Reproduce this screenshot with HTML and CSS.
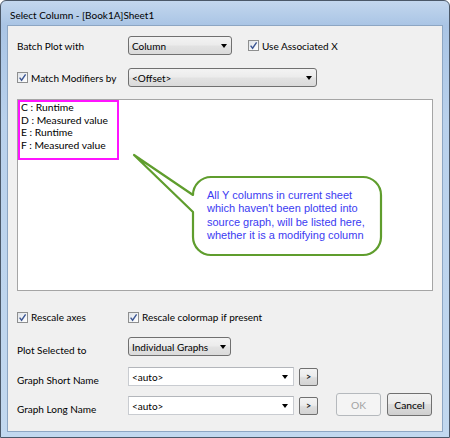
FILE: index.html
```html
<!DOCTYPE html>
<html>
<head>
<meta charset="utf-8">
<link rel="stylesheet" href="styles.css">
</head>
<body>
<div class="window">
  <div class="titlebar">Select Column - [Book1A]Sheet1</div>
  <div class="client">
    <div class="row r1">
      <span class="lbl">Batch Plot with</span>
      <div class="combo ro w-col"><span class="val">Column</span><span class="arrow"></span></div>
      <label class="check ml-x"><span class="cb"><svg viewBox="0 0 9 9"><path d="M1.6 4.6 L3.6 7.2 L7.6 1.4"/></svg></span><span>Use Associated X</span></label>
    </div>
    <div class="row r2">
      <label class="check lbl"><span class="cb"><svg viewBox="0 0 9 9"><path d="M1.6 4.6 L3.6 7.2 L7.6 1.4"/></svg></span><span>Match Modifiers by</span></label>
      <div class="combo ro w-off"><span class="val">&lt;Offset&gt;</span><span class="arrow"></span></div>
    </div>
    <div class="listbox">
      <div class="items">
        <span>C : Runtime</span>
        <span>D : Measured value</span>
        <span>E : Runtime</span>
        <span>F : Measured value</span>
      </div>
      <svg class="callout" width="400" height="170" viewBox="0 0 400 170">
        <path d="M175 95 L116 55 L175 112 L175 137 A18 18 0 0 0 193 155 L345 155 A18 18 0 0 0 363 137 L363 95 A18 18 0 0 0 345 77 L193 77 A18 18 0 0 0 175 95 Z"/>
      </svg>
      <div class="callout-text">All Y columns in current sheet<br>which haven't been plotted into<br>source graph, will be listed here,<br>whether it is a modifying column</div>
    </div>
    <div class="row r3">
      <label class="check lbl"><span class="cb"><svg viewBox="0 0 9 9"><path d="M1.6 4.6 L3.6 7.2 L7.6 1.4"/></svg></span><span>Rescale axes</span></label>
      <label class="check"><span class="cb"><svg viewBox="0 0 9 9"><path d="M1.6 4.6 L3.6 7.2 L7.6 1.4"/></svg></span><span>Rescale colormap if present</span></label>
    </div>
    <div class="row r4">
      <span class="lbl low">Plot Selected to</span>
      <div class="combo ro w-ind"><span class="val">Individual Graphs</span><span class="arrow"></span></div>
    </div>
    <div class="row r5">
      <span class="lbl low">Graph Short Name</span>
      <div class="combo ed w-auto"><span class="val">&lt;auto&gt;</span><span class="arrow"></span></div>
      <button class="small">&gt;</button>
    </div>
    <div class="row r6">
      <span class="lbl low">Graph Long Name</span>
      <div class="combo ed w-auto"><span class="val">&lt;auto&gt;</span><span class="arrow"></span></div>
      <button class="small">&gt;</button>
      <div class="actions">
        <button class="btn disabled">OK</button>
        <button class="btn">Cancel</button>
      </div>
    </div>
  </div>
</div>
</body>
</html>
```

FILE: styles.css
```css
html, body {
  margin: 0;
  padding: 0;
  background: #ffffff;
}
body {
  font-family: Lato, "Liberation Sans", sans-serif;
  font-size: 10px;
  color: #000;
}
.window {
  width: 450px;
  height: 438px;
  box-sizing: border-box;
  border: 1px solid #4b5868;
  border-radius: 6px 6px 0 0;
  background: linear-gradient(to bottom, #c3d7ee 0px, #aac5e5 24px, #b9d1ec 120px, #c2d8ef 100%);
  padding: 0 6px 5px 6px;
  display: flex;
  flex-direction: column;
}
.titlebar {
  height: 24px;
  box-sizing: border-box;
  padding: 3px 0 0 3px;
  display: flex;
  align-items: center;
  font-size: 10px;
  color: #000;
}
.client {
  flex: 1;
  background: #f0f0f0;
  border: 1px solid #8da6c3;
  padding: 10px 9px 0 9px;
  display: flex;
  flex-direction: column;
}
.row {
  display: flex;
  align-items: center;
  height: 19px;
  flex: none;
}
.r2 { margin-top: 13px; }
.r3 { margin-top: 16px; height: 20px; }
.r4 { margin-top: 10px; }
.r5 { margin-top: 11px; }
.r6 { margin-top: 10px; }
.lbl {
  width: 111px;
  flex: none;
  box-sizing: border-box;
  white-space: nowrap;
}
.lbl.low { padding-top: 6px; }
.check {
  display: flex;
  align-items: center;
  white-space: nowrap;
}
.ml-x { margin-left: 16px; }
.cb {
  width: 11px;
  height: 11px;
  box-sizing: border-box;
  border: 1px solid #8e8f8f;
  background: linear-gradient(135deg, #dfe3e8 0%, #f4f6f8 60%, #ffffff 100%);
  margin-right: 3px;
  flex: none;
  display: flex;
}
.cb svg {
  width: 9px;
  height: 9px;
}
.cb path {
  fill: none;
  stroke: #3c5693;
  stroke-width: 1.4;
}
.combo {
  height: 19px;
  box-sizing: border-box;
  display: flex;
  align-items: center;
  flex: none;
  position: relative;
}
.combo.ro {
  border: 1px solid #707070;
  border-radius: 3px;
  background: linear-gradient(to bottom, #f3f3f3 0%, #ececec 45%, #e2e2e2 55%, #dadada 100%);
}
.combo.ed {
  border: 1px solid #c9ccd1;
  border-top-color: #b3b6bb;
  background: #ffffff;
}
.combo .val {
  padding-left: 3px;
  flex: 1;
  white-space: nowrap;
}
.combo .arrow {
  width: 0;
  height: 0;
  border-left: 3.5px solid transparent;
  border-right: 3.5px solid transparent;
  border-top: 4px solid #000;
  margin-right: 4px;
}
.combo.ed .arrow { margin-right: 5px; }
.w-col { width: 104px; }
.w-off { width: 189px; }
.w-ind { width: 103px; }
.w-auto { width: 166px; }
.listbox {
  margin-top: 12px;
  height: 192px;
  box-sizing: border-box;
  border: 1px solid #a5a5a5;
  background: #ffffff;
  position: relative;
  flex: none;
}
.items {
  width: 101px;
  height: 60px;
  box-sizing: border-box;
  border: 2px solid #ff14ff;
  padding: 0 0 0 1px;
  line-height: 12.7px;
  font-size: 10.3px;
}
.items span {
  display: block;
  white-space: nowrap;
}
.items span:first-child { margin-top: -1px; }
.callout {
  position: absolute;
  left: 0;
  top: 0;
}
.callout path {
  fill: #ffffff;
  stroke: #5f9d2d;
  stroke-width: 2.2;
  stroke-linejoin: round;
}
.callout-text {
  position: absolute;
  left: 189px;
  top: 89px;
  font-family: "Liberation Sans", Arial, sans-serif;
  font-size: 11px;
  line-height: 13.3px;
  color: #3b3bf2;
  white-space: nowrap;
}
button {
  font-family: inherit;
  font-size: inherit;
  padding: 0;
  margin: 0;
}
.small {
  width: 19px;
  height: 18px;
  margin-left: 5px;
  border: 1px solid #707070;
  border-radius: 2px;
  background: linear-gradient(to bottom, #f3f3f3 0%, #ececec 45%, #dddddd 55%, #d3d3d3 100%);
  font-size: 9px;
  font-weight: bold;
  line-height: 14px;
  color: #222;
}
.actions {
  margin-left: auto;
  margin-right: 1px;
  display: flex;
  gap: 6px;
  align-self: flex-start;
  margin-top: -3px;
}
.btn {
  width: 45px;
  height: 23px;
  border: 1px solid #707070;
  border-radius: 3px;
  background: linear-gradient(to bottom, #f2f2f2 0%, #ebebeb 45%, #dddddd 50%, #cfcfcf 100%);
  color: #000;
  font-size: 10.3px;
}
.btn.disabled {
  border-color: #b5b9bd;
  background: #f4f4f4;
  color: #a3a3a3;
}
```
